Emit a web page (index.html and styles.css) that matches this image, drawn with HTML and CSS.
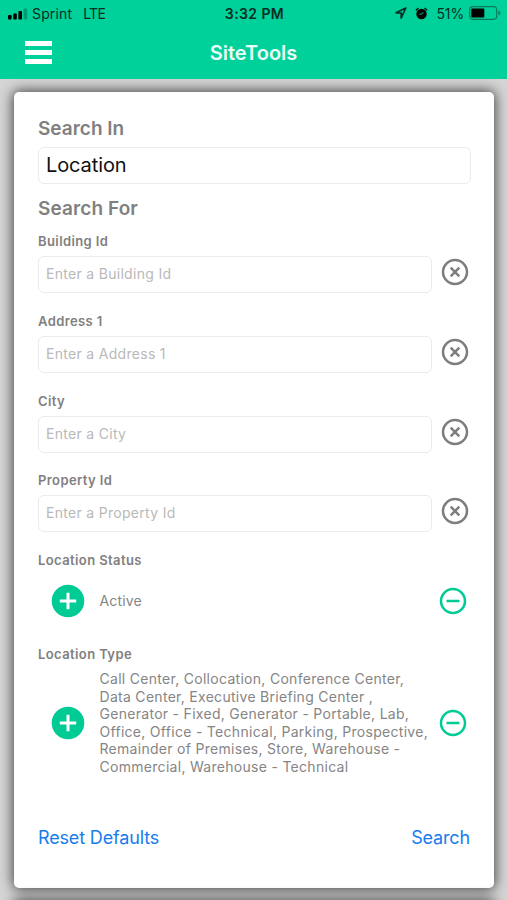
FILE: index.html
```html
<!DOCTYPE html>
<html lang="en">
<head>
<meta charset="utf-8">
<meta name="viewport" content="width=device-width, initial-scale=1">
<title>SiteTools</title>
<link rel="stylesheet" href="styles.css">
</head>
<body>
<svg class="sprites" aria-hidden="true">
  <symbol id="clear" viewBox="0 0 28 28"><g fill="none" stroke="currentColor" stroke-width="2.5"><circle cx="14" cy="14" r="12"/><path d="M9.7 9.7l8.6 8.6M18.3 9.7l-8.6 8.6"/></g></symbol>
  <symbol id="minus" viewBox="0 0 28 28"><g fill="none" stroke="currentColor" stroke-width="2.5"><circle cx="14" cy="14" r="12"/><path d="M7.5 14h13"/></g></symbol>
  <symbol id="plus" viewBox="0 0 34 34"><circle cx="17" cy="17" r="16.3" fill="currentColor"/><path d="M17 8.8v16.4M8.8 17h16.4" stroke="#fff" stroke-width="3"/></symbol>
</svg>
<header class="header">
  <div class="status">
    <div class="status-left">
      <svg class="signal" width="20" height="12" viewBox="0 0 20 12"><rect x="0" y="7" width="3.6" height="4.5" rx="1"/><rect x="5.2" y="5.5" width="3.6" height="6" rx="1"/><rect x="10.4" y="3" width="3.6" height="8.5" rx="1"/><rect x="15.6" y="0.5" width="3.6" height="11" rx="1" opacity=".25"/></svg>
      <span class="carrier">Sprint</span><span class="network">LTE</span>
    </div>
    <div class="time">3:32 PM</div>
    <div class="status-right">
      <svg width="12" height="12" viewBox="0 0 12 12"><path d="M1 5.8L10.8 1 6.2 11V6z" fill="none" stroke="#062e23" stroke-width="1.7" stroke-linejoin="round"/></svg>
      <svg class="alarm" width="13" height="13" viewBox="0 0 13 13"><circle cx="6.5" cy="7" r="5.2"/><path d="M.9 3.4L3.5 1M12.1 3.4L9.5 1" stroke="#062e23" stroke-width="1.7"/><path d="M4.4 7.2h2.3l1.6-2.2" fill="none" stroke="#00d09a" stroke-width=".9"/></svg>
      <span class="percent">51%</span>
      <svg class="battery" width="32" height="14" viewBox="0 0 32 14"><rect x=".7" y=".7" width="27" height="12.6" rx="3.2" fill="none" stroke="#08785a" stroke-width="1.2"/><rect x="2.3" y="2.5" width="13" height="9" rx="1"/><path d="M29.5 4.5q1.8.8 1.8 2.5t-1.8 2.5z" fill="#08785a"/></svg>
    </div>
  </div>
  <nav class="nav">
    <button class="menu" aria-label="Menu"><span></span><span></span><span></span></button>
    <h1 class="title">SiteTools</h1>
  </nav>
</header>
<main class="page">
  <section class="card">
    <h2 class="heading">Search In</h2>
    <div class="input select">Location</div>
    <h2 class="heading heading-for">Search For</h2>
    <div class="field"><div class="label">Building Id</div><div class="entry"><div class="input hint">Enter a Building Id</div><svg class="ring"><use href="#clear"/></svg></div></div>
    <div class="field"><div class="label">Address 1</div><div class="entry"><div class="input hint">Enter a Address 1</div><svg class="ring"><use href="#clear"/></svg></div></div>
    <div class="field"><div class="label">City</div><div class="entry"><div class="input hint">Enter a City</div><svg class="ring"><use href="#clear"/></svg></div></div>
    <div class="field"><div class="label">Property Id</div><div class="entry"><div class="input hint">Enter a Property Id</div><svg class="ring"><use href="#clear"/></svg></div></div>
    <div class="label label-status">Location Status</div>
    <div class="choice choice-status"><svg class="add"><use href="#plus"/></svg><div class="values">Active</div><svg class="ring green"><use href="#minus"/></svg></div>
    <div class="label label-type">Location Type</div>
    <div class="choice choice-type"><svg class="add"><use href="#plus"/></svg><div class="values">Call Center, Collocation, Conference Center,<br>Data Center, Executive Briefing Center ,<br>Generator - Fixed, Generator - Portable, Lab,<br>Office, Office - Technical, Parking, Prospective,<br>Remainder of Premises, Store, Warehouse -<br>Commercial, Warehouse - Technical</div><svg class="ring green"><use href="#minus"/></svg></div>
    <div class="actions"><a class="reset">Reset Defaults</a><a class="search">Search</a></div>
  </section>
  <section class="card next"></section>
</main>
</body>
</html>
```
FILE: styles.css
```css
* { box-sizing: border-box; }
body { margin: 0; height: 900px; overflow: hidden; display: flex; flex-direction: column; background: #d5d5d5; font-family: Inter, "Liberation Sans", sans-serif; color: #808080; }
.sprites { display: none; }
svg { display: block; flex: none; }
.header { height: 79px; flex: none; background: #00d09a; color: #062e23; z-index: 1; }
.status { height: 28px; display: grid; grid-template-columns: 1fr auto 1fr; align-items: center; padding: 0 6px 0 8px; font-size: 14px; white-space: nowrap; }
.status-left, .status-right { display: flex; align-items: center; }
.status-left { margin-top: -1px; }
.status-right { justify-content: flex-end; margin-top: -2px; }
.carrier { margin-left: 4px; letter-spacing: .15px; }
.network { margin-left: 11px; letter-spacing: -.7px; }
.time { font-weight: 600; font-size: 14px; letter-spacing: .4px; margin-top: -2px; }
.alarm { margin-left: 8px; }
.percent { margin-left: 8px; letter-spacing: -.15px; }
.battery { margin-left: 5px; }
.nav { height: 51px; display: grid; grid-template-columns: 1fr auto 1fr; align-items: center; padding: 0 25px; }
.menu { width: 28px; height: 23px; padding: 0; border: 0; background: none; display: flex; flex-direction: column; justify-content: space-between; margin-bottom: 3px; }
.menu span { width: 27px; height: 5px; background: #fff; }
.title { margin: 0 0 2px; font-size: 20px; line-height: 24px; font-weight: 600; letter-spacing: 0; color: #e9fff8; }
.page { flex: 1; min-height: 0; overflow: hidden; padding: 13px 13px 0 14px; }
.card { height: 796px; padding: 24px; border-radius: 5px; background: #fff; box-shadow: 0 0 13px 1px rgba(0,0,0,.72); position: relative; }
.next { height: 40px; margin-top: 13px; }
.heading { margin: 0; padding-top: 1px; height: 31px; font-size: 19px; line-height: 24px; font-weight: 600; white-space: nowrap; }
.heading-for { margin: 12px 0 0; height: 37px; letter-spacing: .1px; }
.input { height: 37px; border: 1px solid #ebebeb; border-radius: 6px; padding-left: 8px; line-height: 34px; white-space: nowrap; margin-left: -.5px; }
.select { color: #111; font-size: 20px; width: 433px; letter-spacing: -.1px; padding-left: 7.5px; }
.field { height: 79.75px; }
.label { height: 16px; font-size: 13px; line-height: 16px; font-weight: 600; letter-spacing: .4px; white-space: nowrap; }
.entry { margin-top: 7px; display: flex; gap: 9px; }
.entry .input { width: 394px; }
.entry .ring { margin-top: 2px; }
.hint { color: #b9b9b9; font-size: 14px; letter-spacing: .3px; padding-left: 7.5px; }
.ring { width: 28px; height: 28px; color: #7d7d7d; }
.green, .add { color: #00cb95; }
.add { width: 34px; height: 34px; }
.choice { display: flex; align-items: center; padding: 0 3px 0 13px; }
.choice-status { height: 40px; margin-top: 13px; }
.label-type { margin-top: 25px; }
.choice-type { height: 105px; margin-top: 8px; }
.values { flex: 1; min-width: 0; margin-left: 14.5px; font-size: 14px; line-height: 17.5px; letter-spacing: .29px; white-space: nowrap; color: #858585; }
.choice-status .values { letter-spacing: .15px; margin-top: -1px; }
.actions { margin-top: 51px; display: flex; justify-content: space-between; font-size: 18px; line-height: 24px; letter-spacing: -.15px; color: #167dee; }
```
